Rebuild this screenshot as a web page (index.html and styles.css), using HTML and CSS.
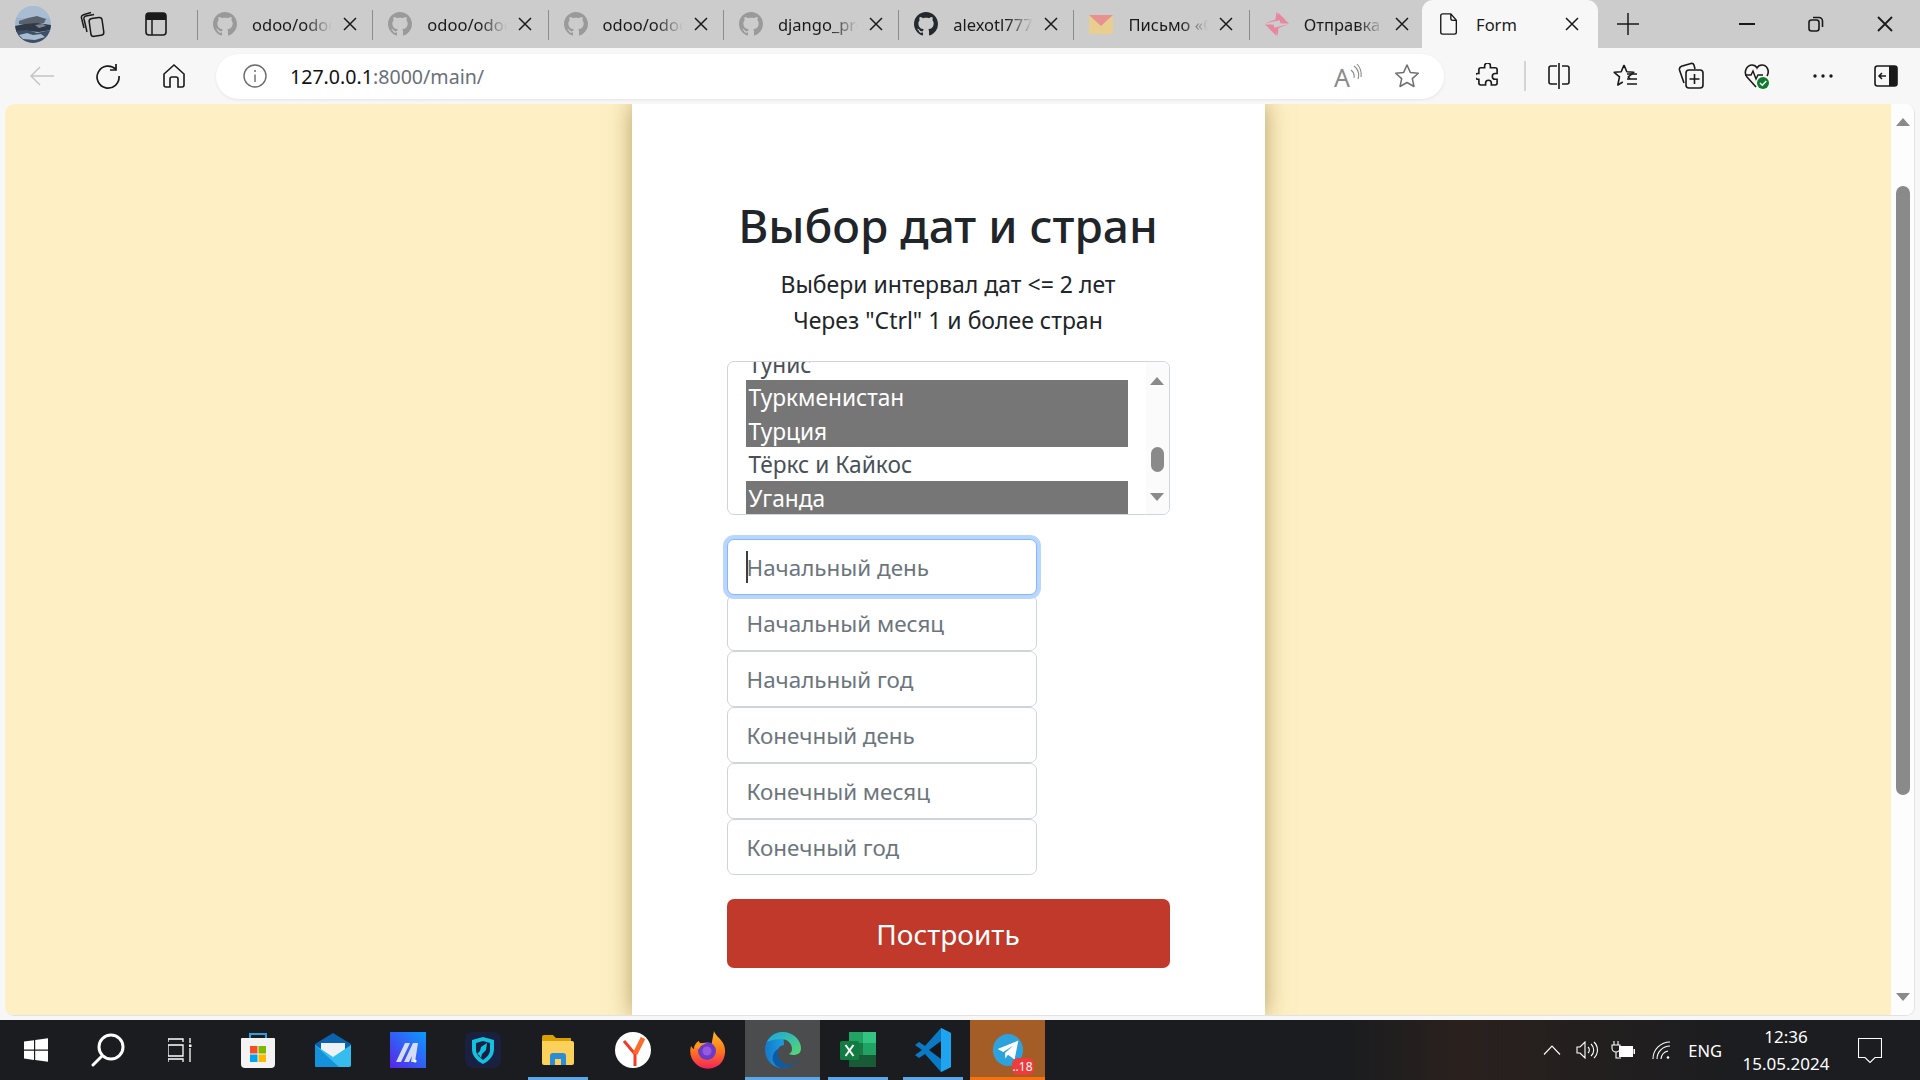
FILE: index.html
```html
<!DOCTYPE html>
<html>
<head>
    <title>Form</title>
    <link rel="stylesheet" href="styles.css">
</head>
<body>
    <svg class="defs" width="0" height="0">
        <symbol id="gh" viewBox="0 0 16 16"><path d="M8 0C3.58 0 0 3.58 0 8c0 3.54 2.29 6.53 5.47 7.59.4.07.55-.17.55-.38 0-.19-.01-.82-.01-1.49-2.01.37-2.53-.49-2.69-.94-.09-.23-.48-.94-.82-1.13-.28-.15-.68-.52-.01-.53.63-.01 1.08.58 1.23.82.72 1.21 1.87.87 2.33.66.07-.52.28-.87.51-1.07-1.78-.2-3.64-.89-3.64-3.95 0-.87.31-1.59.82-2.15-.08-.2-.36-1.02.08-2.12 0 0 .67-.21 2.2.82.64-.18 1.32-.27 2-.27.68 0 1.36.09 2 .27 1.53-1.04 2.2-.82 2.2-.82.44 1.1.16 1.92.08 2.12.51.56.82 1.27.82 2.15 0 3.07-1.87 3.75-3.65 3.95.29.25.54.73.54 1.48 0 1.07-.01 1.93-.01 2.2 0 .21.15.46.55.38A8.013 8.013 0 0016 8c0-4.42-3.58-8-8-8z"/></symbol>
        <symbol id="x" viewBox="0 0 14 14"><path d="M1 1l12 12M13 1L1 13" fill="none" stroke="currentColor" stroke-width="1.5"/></symbol>
    </svg>

    <!-- tabs -->
    <div class="tabstrip">
        <div class="strip-left">
            <svg class="avatar" width="36" height="37" viewBox="0 0 36 37">
                <defs><clipPath id="av"><ellipse cx="18" cy="18.500" rx="18" ry="18.500"/></clipPath></defs>
                <g clip-path="url(#av)">
                    <rect width="36" height="37" fill="#9db4cc"/>
                    <path d="M0 0h36v12H0z" fill="#a9bdd2"/>
                    <path d="M4 15l9-3 9-2 9 3-2 4-8 1-10 1-7-1z" fill="#59616d"/>
                    <path d="M0 20l10-2 12-1 14 2v5l-12 2-12-1-12 1z" fill="#2f3947"/>
                    <path d="M0 25l12-1 10 3 14-3v13H0z" fill="#3d5068"/>
                    <path d="M4 29l8-2 6 2 8-1 4 3-10 3-12-1z" fill="#a8bccd"/>
                    <path d="M20 19l8-1 3 2-7 2z" fill="#7d8794"/>
                </g>
            </svg>
            <svg class="strip-icon" width="26" height="28" viewBox="0 0 26 28" fill="none" stroke="#1a1a1a" stroke-width="1.5">
                <rect x="10" y="8" width="13" height="18" rx="3" transform="rotate(-8 16 17)"/>
                <path d="M7 22L4 9c-.3-1.5.4-2.7 2-3l8-1.6M4 18L1.500 8c-.4-1.600.4-2.800 2-3.300L11 2.500"/>
            </svg>
            <svg class="strip-icon" width="22" height="26" viewBox="0 0 22 26">
                <rect x="1" y="2" width="20" height="22" rx="3" fill="none" stroke="#1a1a1a" stroke-width="1.600"/>
                <path d="M1 5a3 3 0 013-3h14a3 3 0 013 3v4H1z" fill="#1a1a1a"/>
                <path d="M7 9v15" stroke="#1a1a1a" stroke-width="1.500"/>
            </svg>
        </div>
        <div class="tab"><svg class="favicon muted"><use href="#gh"/></svg><span class="tab-title">odoo/odoo: Odoo</span><svg class="tab-close"><use href="#x"/></svg></div>
        <div class="tab"><svg class="favicon muted"><use href="#gh"/></svg><span class="tab-title">odoo/odoo: Odoo</span><svg class="tab-close"><use href="#x"/></svg></div>
        <div class="tab"><svg class="favicon muted"><use href="#gh"/></svg><span class="tab-title">odoo/odoo: Odoo</span><svg class="tab-close"><use href="#x"/></svg></div>
        <div class="tab"><svg class="favicon muted"><use href="#gh"/></svg><span class="tab-title">django_project</span><svg class="tab-close"><use href="#x"/></svg></div>
        <div class="tab"><svg class="favicon"><use href="#gh"/></svg><span class="tab-title">alexotl777/project</span><svg class="tab-close"><use href="#x"/></svg></div>
        <div class="tab">
            <svg class="favicon" viewBox="0 0 24 24"><rect y="3" width="24" height="19" fill="#e8cf8f"/><path d="M0 3h24L12 14z" fill="#e79191"/></svg>
            <span class="tab-title">Письмо «Отправка»</span><svg class="tab-close"><use href="#x"/></svg>
        </div>
        <div class="tab">
            <svg class="favicon" viewBox="0 0 24 24"><path d="M0 11.500L10.500 7.500 11.500 0l4 8zM12.500 0l8 8-5 3.500zM24 12l-10.500 4-1 8-4-8zM11.500 24l-8-8 5-3.500zM0 12.500h8l-4 3.500z" fill="#e8859f"/><path d="M24 11.500h-8l4-3.500z" fill="#e8859f"/></svg>
            <span class="tab-title">Отправка письма</span><svg class="tab-close"><use href="#x"/></svg>
        </div>
        <div class="tab tab-active">
            <svg class="favicon" viewBox="0 0 24 24" stroke="#1a1a1a" stroke-width="1.500"><path d="M5 1h9l6 7v13a2 2 0 01-2 2H5a2 2 0 01-2-2V3a2 2 0 012-2zM14 1v5a2 2 0 002 2h4"/></svg>
            <span class="tab-title">Form</span><svg class="tab-close"><use href="#x"/></svg>
        </div>
        <svg class="new-tab" width="22" height="22" viewBox="0 0 22 22"><path d="M11 0v22M0 11h22" stroke="#1a1a1a" stroke-width="1.500"/></svg>
        <div class="win-controls">
            <svg width="16" height="16" viewBox="0 0 16 16"><path d="M0 8h16" stroke="#1a1a1a" stroke-width="2"/></svg>
            <svg width="16" height="16" viewBox="0 0 16 16" fill="none" stroke="#1a1a1a" stroke-width="1.600"><rect x="1" y="4" width="10" height="11" rx="2.500"/><path d="M5 1.500h6a3.500 3.500 0 013.500 3.500v6"/></svg>
            <svg width="16" height="16" viewBox="0 0 16 16"><path d="M1 1l14 14M15 1L1 15" stroke="#1a1a1a" stroke-width="1.800"/></svg>
        </div>
    </div>

    <!-- toolbar -->
    <div class="toolbar">
        <div class="nav-btn"><svg width="24" height="24" viewBox="0 0 24 24" fill="none" stroke="#c4c4c4" stroke-width="1.500"><path d="M24 12H1M10 3l-9 9 9 9"/></svg></div>
        <div class="nav-btn"><svg width="26" height="26" viewBox="0 0 26 26" fill="none" stroke="#1a1a1a" stroke-width="1.700"><path d="M21 6.500A11 11 0 1024 13"/><path d="M21 1v6h-6"/></svg></div>
        <div class="nav-btn"><svg width="24" height="26" viewBox="0 0 24 26" fill="none" stroke="#1a1a1a" stroke-width="1.600"><path d="M12 2L2 11v11a2 2 0 002 2h4v-8a2 2 0 012-2h4a2 2 0 012 2v8h4a2 2 0 002-2V11z"/></svg></div>
        <div class="addressbar">
            <svg class="info" width="24" height="24" viewBox="0 0 24 24"><circle cx="12" cy="12" r="11" fill="none" stroke="#6b6b6b" stroke-width="1.400"/><path d="M12 10.500v7.500" stroke="#6b6b6b" stroke-width="1.400"/><circle cx="12" cy="7" r="1" fill="#6b6b6b"/></svg>
            <span class="url"><span class="url-host">127.0.0.1</span>:8000/main/</span>
            <svg class="read-aloud" width="28" height="26" viewBox="0 0 28 26"><text x="0" y="24" class="read-a">A</text><path d="M17 7a8 8 0 013 8M20 3a12 12 0 014 13M23 1a16 16 0 014 13" fill="none" stroke="#8a8a8a" stroke-width="1.100"/></svg>
            <svg class="addr-star" width="26" height="26" viewBox="0 0 26 26"><path d="M13 2l3.300 7.400 8 .8-6 5.400 1.700 7.900-7-4-7 4 1.700-7.900-6-5.400 8-.8z" fill="none" stroke="#6f6f6f" stroke-width="1.500" stroke-linejoin="round"/></svg>
        </div>
        <div class="tool-group">
            <svg class="tool t-puzzle" width="24" height="26" viewBox="0 0 24 26" fill="none" stroke="#1a1a1a" stroke-width="1.700"><path d="M9 4a3 3 0 016 0v2h5a2 2 0 012 2v4h-2a3 3 0 000 6h2v4a2 2 0 01-2 2h-4v-2a3 3 0 00-6 0v2H5a2 2 0 01-2-2v-4H2a3 3 0 010-6h1V8a2 2 0 012-2h4z" transform="translate(0 -1) scale(.96)"/></svg>
            <span class="tool-sep"></span>
            <svg class="tool t-split" width="24" height="26" viewBox="0 0 24 26" fill="none" stroke="#1a1a1a" stroke-width="1.600"><path d="M10 3H4a2 2 0 00-2 2v14a2 2 0 002 2h6M15 3h5a2 2 0 012 2v14a2 2 0 01-2 2h-5M12 0v26"/></svg>
            <svg class="tool t-favs" width="26" height="26" viewBox="0 0 26 26" fill="none" stroke="#1a1a1a" stroke-width="1.600" stroke-linejoin="round"><path d="M12 2l2.800 6.700 7 .6-5.500 4.600 1.700 2M12 2L9.200 8.700l-7 .6 5.300 4.600-1.700 8.100 5-3"/><path d="M15 11h10M15 16h10M15 21h10"/></svg>
            <svg class="tool t-coll" width="26" height="28" viewBox="0 0 26 28" fill="none" stroke="#1a1a1a" stroke-width="1.600"><path d="M6 21L1.500 8C1 6 2 5 3.500 4.300L13 1.500c1.500-.4 2.500.3 3 1.500l1 4"/><rect x="8" y="8" width="17" height="18" rx="3"/><path d="M16.500 12v10M11.500 17h10"/></svg>
            <svg class="tool t-health" width="26" height="28" viewBox="0 0 26 28"><path d="M12 25L3 15C-1 10 3 3 8 3c2 0 4 1 5 3 1-2 3-3 5-3 5 0 8 6 5 11" fill="none" stroke="#1a1a1a" stroke-width="1.600"/><path d="M1 13h6l2-4 3 8 2-4h5" fill="none" stroke="#1a1a1a" stroke-width="1.500"/><circle cx="19" cy="21" r="6" fill="#0f7b2e"/><path d="M16 21l2.300 2.300 4-4.300" fill="none" stroke="#fff" stroke-width="1.400"/></svg>
            <svg class="tool t-dots" width="20" height="6" viewBox="0 0 20 6"><circle cx="2" cy="3" r="1.700" fill="#1a1a1a"/><circle cx="10" cy="3" r="1.700" fill="#1a1a1a"/><circle cx="18" cy="3" r="1.700" fill="#1a1a1a"/></svg>
            <svg class="tool t-side" width="24" height="22" viewBox="0 0 24 22"><rect x="1" y="1" width="22" height="20" rx="2.500" fill="none" stroke="#1a1a1a" stroke-width="1.600"/><path d="M15 1h6a2 2 0 012 2v16a2 2 0 01-2 2h-6z" fill="#1a1a1a"/><path d="M12 11H5M8 8l-3 3 3 3" fill="none" stroke="#1a1a1a" stroke-width="1.500"/></svg>
        </div>
    </div>

    <!-- page -->
    <div class="viewport">
        <div class="page">
            <div class="panel">
                <h1>Выбор дат и стран</h1>
                <p class="hint">Выбери интервал дат &lt;= 2 лет</p>
                <p class="hint">Через "Ctrl" 1 и более стран</p>
                <div class="country-select">
                    <div class="country-list">
                        <div class="country">Тунис</div>
                        <div class="country selected">Туркменистан</div>
                        <div class="country selected">Турция</div>
                        <div class="country">Тёркс и Кайкос</div>
                        <div class="country selected">Уганда</div>
                    </div>
                    <div class="list-scroll">
                        <span class="arrow-up"></span>
                        <span class="list-thumb"></span>
                        <span class="arrow-down"></span>
                    </div>
                </div>
                <div class="fields">
                    <input class="field field-focus" type="text" placeholder="Начальный день">
                    <input class="field" type="text" placeholder="Начальный месяц">
                    <input class="field" type="text" placeholder="Начальный год">
                    <input class="field" type="text" placeholder="Конечный день">
                    <input class="field" type="text" placeholder="Конечный месяц">
                    <input class="field" type="text" placeholder="Конечный год">
                </div>
                <button class="build">Построить</button>
            </div>
        </div>
        <div class="page-scroll">
            <span class="arrow-up"></span>
            <span class="page-thumb"></span>
            <span class="arrow-down"></span>
        </div>
    </div>

    <!-- taskbar -->
    <div class="taskbar">
        <div class="task-slot narrow"><svg width="24" height="24" viewBox="0 0 24 24" fill="#fff"><path d="M0 3.500l10-1.300v9.300H0zM11.200 2L24 .2v11.300H11.200zM0 12.700h10v9.200L0 20.500zM11.200 12.700H24v11.100L11.200 22z"/></svg></div>
        <div class="task-slot narrow"><svg width="34" height="34" viewBox="0 0 34 34" fill="none" stroke="#fff" stroke-width="3"><circle cx="20" cy="14" r="12"/><path d="M11 23L2 32" stroke-linecap="round"/></svg></div>
        <div class="task-slot narrow"><svg width="24" height="24" viewBox="0 0 24 24" fill="none" stroke="#fff" stroke-width="1.300"><path d="M0 4V1h15v3M0 7h15v11H0zM0 24v-3h15v3M22 0v5M22 10v14"/><rect x="21" y="6.500" width="2.500" height="2.500" fill="#fff" stroke="none"/></svg></div>
        <div class="task-slot first-app">
            <svg width="36" height="36" viewBox="0 0 36 36"><path d="M10 7V2h16v5" fill="none" stroke="#2aa0e0" stroke-width="2"/><path d="M2 6h32a1 1 0 011 1v25a4 4 0 01-4 4H5a4 4 0 01-4-4V7a1 1 0 011-1z" fill="#f3f3f3"/><rect x="10" y="14" width="7.500" height="7.500" fill="#f25022"/><rect x="18.500" y="14" width="7.500" height="7.500" fill="#7fba00"/><rect x="10" y="22.500" width="7.500" height="7.500" fill="#00a4ef"/><rect x="18.500" y="22.500" width="7.500" height="7.500" fill="#ffb900"/></svg>
        </div>
        <div class="task-slot">
            <svg width="36" height="34" viewBox="0 0 36 34"><path d="M18 0L0 11v21a2 2 0 002 2h32a2 2 0 002-2V11z" fill="#0b63ae"/><path d="M6 10h24v9l-12 7-12-7z" fill="#eef2f5"/><path d="M0 12l18 12 18-12v20a2 2 0 01-2 2H2a2 2 0 01-2-2z" fill="#35bdf0"/><path d="M0 12l24 22H2a2 2 0 01-2-2z" fill="#1493dc"/></svg>
        </div>
        <div class="task-slot">
            <svg width="36" height="36" viewBox="0 0 36 36"><defs><linearGradient id="mg" x1="0" y1="1" x2="1" y2="0"><stop offset="0" stop-color="#5a23ea"/><stop offset="1" stop-color="#0a9bff"/></linearGradient></defs><rect width="36" height="36" fill="url(#mg)"/><path d="M6 30L15 11h5L11 30zM14 30l9-19h5l-3 19h-4l1-6-3 6z" fill="#d5dcf8"/><circle cx="25" cy="29" r="1.600" fill="#fff"/></svg>
        </div>
        <div class="task-slot">
            <svg width="36" height="36" viewBox="0 0 36 36"><rect width="36" height="36" rx="8" fill="#1a2140"/><path d="M18 5l11 3v9c0 7-5 12-11 15C12 29 7 24 7 17V8z" fill="#12c3e0"/><path d="M18 9l7 2v7c0 4-3 7-7 10-4-3-7-6-7-10v-7z" fill="#172040"/><path d="M22 11l-1 7-4 4-1 4-2-3-2-1 3-3 1-4z" fill="#12c3e0"/></svg>
        </div>
        <div class="task-slot open">
            <svg width="34" height="32" viewBox="0 0 34 32"><path d="M1 3a2 2 0 012-2h9l3 3h15v6H1z" fill="#d9a000"/><path d="M1 7h30a2 2 0 012 2v20a2 2 0 01-2 2H3a2 2 0 01-2-2z" fill="#fbd15b"/><path d="M9 31v-9a3 3 0 013-3h10a3 3 0 013 3v9h-5v-6h-6v6z" fill="#2a8dd6"/></svg>
        </div>
        <div class="task-slot">
            <svg width="36" height="36" viewBox="0 0 36 36"><circle cx="18" cy="18" r="18" fill="#fff"/><path d="M9 9l11 13v12" fill="none" stroke="#f33b24" stroke-width="3"/><path d="M28 6L20 22" fill="none" stroke="#ff6a2b" stroke-width="5"/></svg>
        </div>
        <div class="task-slot">
            <svg width="36" height="38" viewBox="0 0 36 38"><defs><linearGradient id="ff" x1="0" y1="0" x2="0" y2="1"><stop offset="0" stop-color="#ffbd2e"/><stop offset=".5" stop-color="#ff7a1a"/><stop offset="1" stop-color="#f5225c"/></linearGradient></defs><path d="M24 0c1 4 6 7 9 12 4 7 2 17-4 22-7 5-17 5-23-1C1 29-1 22 1 15c1 1 2 3 3 3 0-3 2-7 5-8 0 2 2 3 4 3 3 0 7 1 8 3 1-5 2-11 3-16z" fill="url(#ff)"/><circle cx="17" cy="20" r="9" fill="#6a3bc8"/><circle cx="17" cy="20" r="4.500" fill="#9a58e0"/><path d="M4 16c3-4 9-5 13-3-4 0-7 2-8 5z" fill="#ff9a1a"/></svg>
        </div>
        <div class="task-slot tile">
            <svg width="36" height="38" viewBox="0 0 36 38"><defs><linearGradient id="eg" x1="0" y1="0" x2="1" y2="0"><stop offset="0" stop-color="#1578c8"/><stop offset="1" stop-color="#1ea9e8"/></linearGradient><linearGradient id="eg2" x1="0" y1="0" x2="1" y2="1"><stop offset="0" stop-color="#18a6e0"/><stop offset="1" stop-color="#5ad86f"/></linearGradient></defs><path d="M18 1C7 1 0 9 0 19c0 10 8 18 17 18 3 0 5-1 7-2-7 0-12-6-12-13 0-5 4-8 7-8z" fill="url(#eg)"/><path d="M2 11C5 5 11 1 18 1c10 0 18 8 18 16 0 5-3 7-8 7-2 0-4-1-4-1 2-1 3-3 3-5 0-6-5-10-11-10C11 8 6 9 2 11z" fill="url(#eg2)"/><path d="M13 22c0 8 7 14 14 11 3-1 5-3 7-6-2 6-9 10-16 10-2 0-3 0-5-1-5-3-7-9-4-14 1-2 2-3 4-4-1 1-0 2 0 4z" fill="#0d5aa5"/></svg>
        </div>
        <div class="task-slot open">
            <svg width="36" height="38" viewBox="0 0 36 38"><path d="M9 1h25a2 2 0 012 2v31a2 2 0 01-2 2H9z" fill="#1a7a45"/><rect x="9" y="1" width="14" height="11" fill="#21a366"/><rect x="23" y="1" width="13" height="11" fill="#33c481"/><rect x="23" y="12" width="13" height="12" fill="#21a366"/><rect x="9" y="24" width="27" height="12" fill="#185c37"/><rect y="10" width="19" height="19" rx="1.500" fill="#107c41"/><path d="M5.500 14l8 11M13.500 14l-8 11" stroke="#fff" stroke-width="2"/></svg>
        </div>
        <div class="task-slot open">
            <svg width="36" height="44" viewBox="0 0 36 44"><path d="M26 0l10 5v34l-10 5L10 26l-6 4-4-3 7-5-7-5 4-3 6 4z" fill="#0a7ac6"/><path d="M26 0l10 5v34l-10 5z" fill="#1fa4f0"/><path d="M26 13L14 22l12 9z" fill="#15171a"/></svg>
        </div>
        <div class="task-slot alert">
            <div class="tg-wrap">
                <svg width="32" height="32" viewBox="0 0 32 34"><ellipse cx="16" cy="17" rx="16" ry="17" fill="#2ca3dc"/><path d="M5 16L27 7l-4 20-7-5-3 4v-6l9-8-11 7z" fill="#fff"/></svg>
                <span class="tg-badge">..18</span>
            </div>
        </div>
        <div class="tray">
            <svg width="18" height="10" viewBox="0 0 18 10"><path d="M1 9.500L9 1l8 8.500" fill="none" stroke="#fff" stroke-width="1.100"/></svg>
            <svg class="tray-vol" width="22" height="18" viewBox="0 0 22 18" fill="none" stroke="#fff" stroke-width="1.100"><path d="M1 6v6h3l5 5V1L4 6zM12 6a4 4 0 010 6M15 3a8 8 0 010 12M18 1a11 11 0 010 16"/></svg>
            <svg class="tray-bat" width="24" height="18" viewBox="0 0 24 18"><path d="M3 0v4M7 0v4M1 4h8v3a4 4 0 01-8 0zM5 11v6h5" fill="none" stroke="#fff" stroke-width="1.100"/><rect x="8" y="5" width="14" height="11" fill="#fff"/><rect x="22.500" y="8" width="1.500" height="5" fill="#fff"/></svg>
            <svg class="tray-wifi" width="18" height="18" viewBox="0 0 18 18" fill="none" stroke="#fff" stroke-width="1.100"><path d="M1 18A17 17 0 0118 1M5 18A13 13 0 0118 5M9 18a9 9 0 017-8"/><circle cx="16" cy="16.500" r="1.300" fill="#fff" stroke="none"/></svg>
            <span class="tray-lang">ENG</span>
            <div class="clock"><span>12:36</span><span>15.05.2024</span></div>
            <svg class="tray-note" width="24" height="25" viewBox="0 0 24 25"><path d="M.5.500h23v19H17l-5 5-5-5H.5z" fill="none" stroke="#fff" stroke-width="1.100"/></svg>
        </div>
    </div>
</body>
</html>
```

FILE: styles.css
```css
* {
    box-sizing: border-box;
}

body {
    margin: 0;
    width: 1920px;
    height: 1080px;
    overflow: hidden;
    display: flex;
    flex-direction: column;
    font-family: "Noto Sans", "Open Sans", sans-serif;
    background-color: #f7f7f7;
}

.defs {
    display: none;
}

/* tab strip */
.tabstrip {
    height: 48px;
    flex-shrink: 0;
    display: flex;
    align-items: stretch;
    background-color: #cccccc;
}

.strip-left {
    width: 197px;
    flex-shrink: 0;
    display: flex;
    align-items: center;
    padding-left: 15px;
}

.strip-icon:nth-child(2) {
    margin-left: 29px;
}

.strip-icon:nth-child(3) {
    margin-left: 39px;
}

.tab {
    width: 175.3px;
    flex-shrink: 0;
    display: flex;
    align-items: center;
    padding-left: 16px;
    position: relative;
    font-size: 16.5px;
    color: #1a1a1a;
}

.tab::before {
    content: "";
    position: absolute;
    left: 0;
    top: 10px;
    height: 30px;
    width: 1px;
    background-color: #8c8c8c;
}

.favicon {
    width: 24px;
    height: 24px;
    flex-shrink: 0;
    fill: #24292e;
}

.favicon.muted {
    fill: #9a9a9a;
}

.tab-title {
    width: 80px;
    margin-left: 15px;
    margin-right: 4px;
    white-space: nowrap;
    overflow: hidden;
    -webkit-mask-image: linear-gradient(to right, #000 66%, transparent 100%);
    mask-image: linear-gradient(to right, #000 66%, transparent 100%);
}

.tab-close {
    width: 14px;
    height: 14px;
    margin-left: 7px;
    flex-shrink: 0;
    color: #1a1a1a;
}

.tab-active {
    width: 176px;
    margin-left: -2px;
    background-color: #f7f7f7;
    border-radius: 11px 11px 0 0;
    padding-left: 16px;
}

.tab-active::before {
    display: none;
}

.tab-active .favicon {
    width: 22px;
    fill: none;
}

.tab-active .tab-title {
    -webkit-mask-image: none;
    mask-image: none;
    margin-left: 16px;
    margin-right: 0;
    width: 84px;
}

.tab-active .tab-close {
    margin-left: 5px;
}

.new-tab {
    align-self: center;
    margin-left: 19px;
}

.win-controls {
    margin-left: auto;
    width: 277px;
    padding: 0 27px 0 96px;
    display: flex;
    align-items: center;
    justify-content: space-between;
}

/* toolbar */
.toolbar {
    height: 56px;
    flex-shrink: 0;
    display: flex;
    align-items: center;
    background-color: #f7f7f7;
    padding-left: 9px;
}

.nav-btn {
    width: 66px;
    display: flex;
    justify-content: center;
}

.addressbar {
    width: 1228px;
    height: 45px;
    margin-left: 9px;
    display: flex;
    align-items: center;
    background-color: #fff;
    border-radius: 23px;
    box-shadow: 0 1px 3px rgba(0, 0, 0, 0.08);
    padding: 0 24px 0 27px;
}

.url {
    margin-left: 23px;
    font-size: 19.6px;
    color: #69707a;
}

.url-host {
    color: #111;
}

.read-aloud {
    margin-left: auto;
}

.read-a {
    font-size: 25px;
    fill: #8a8a8a;
}

.addr-star {
    margin-left: 32px;
}

.tool-group {
    flex: 1;
    display: flex;
    align-items: center;
    padding-left: 32px;
}

.tool-sep {
    width: 2px;
    height: 30px;
    margin-left: 24px;
    background-color: #d4d4d4;
}

.t-split {
    margin-left: 21px;
}

.t-favs {
    margin-left: 41px;
}

.t-coll {
    margin-left: 40px;
}

.t-health {
    margin-left: 40px;
}

.t-dots {
    margin-left: 43px;
}

.t-side {
    margin-left: 41px;
}

/* page area */
.viewport {
    width: 1910px;
    height: 912px;
    margin: 0 5px;
    flex-shrink: 0;
    display: flex;
    overflow: hidden;
    border-radius: 9px;
    border-bottom: 1px solid #e2e2e2;
    border-right: 1px solid #e2e2e2;
    background-color: #fff;
}

.page {
    width: 1886px;
    flex-shrink: 0;
    overflow: hidden;
    background-color: #fef0c4;
}

.panel {
    width: 633px;
    min-height: 100%;
    margin: 0 auto;
    padding: 91px 95px 0;
    background-color: #fff;
    box-shadow: 0 0 22px rgba(120, 90, 20, 0.55);
    color: #212529;
    text-align: center;
}

h1 {
    margin: 0 0 11px;
    font-size: 46px;
    font-weight: 500;
    line-height: 60px;
    white-space: nowrap;
}

.hint {
    margin: 0;
    font-size: 23px;
    line-height: 36px;
}

.country-select {
    height: 154px;
    margin-top: 23px;
    display: flex;
    border: 1px solid #ced4da;
    border-radius: 7px;
    overflow: hidden;
    text-align: left;
}

.country-list {
    width: 418px;
    padding: 0 18px;
    display: flex;
    flex-direction: column;
    justify-content: flex-end;
    overflow: hidden;
    font-size: 22.7px;
}

.country {
    height: 33.5px;
    flex-shrink: 0;
    padding-left: 3px;
    line-height: 35px;
    white-space: nowrap;
    color: #495057;
}

.country.selected {
    background-color: #767676;
    color: #fff;
}

.list-scroll {
    width: 23px;
    display: flex;
    flex-direction: column;
    align-items: center;
    background-color: #fbfbfb;
    padding-top: 15px;
}

.arrow-up,
.arrow-down {
    width: 0;
    height: 0;
    border-left: 7px solid transparent;
    border-right: 7px solid transparent;
}

.arrow-up {
    border-bottom: 8px solid #8a8a8a;
}

.arrow-down {
    border-top: 8px solid #8a8a8a;
}

.list-thumb {
    width: 13px;
    height: 25px;
    margin: 62px 0 21px;
    border-radius: 7px;
    background-color: #8a8a8a;
}

.fields {
    width: 310px;
    margin-top: 24px;
    display: flex;
    flex-direction: column;
}

.field {
    height: 56px;
    padding: 0 19px;
    border: 1px solid #ced4da;
    border-radius: 7px;
    outline: none;
    font-family: inherit;
    font-size: 22.4px;
    color: #212529;
    background-color: #fff;
}

.field::placeholder {
    color: #6c757d;
    opacity: 1;
}

.field-focus {
    position: relative;
    z-index: 1;
    border-color: #86b7fe;
    box-shadow: 0 0 0 4px #b9d7fe;
    background-image: linear-gradient(#3a3f46, #3a3f46);
    background-repeat: no-repeat;
    background-size: 2px 32px;
    background-position: 18px center;
}

.build {
    display: block;
    width: 443px;
    height: 69px;
    margin-top: 24px;
    border: none;
    border-radius: 7px;
    background-color: #c0392b;
    color: #fff;
    font-family: inherit;
    font-size: 28px;
}

.page-scroll {
    flex: 1;
    display: flex;
    flex-direction: column;
    align-items: center;
    background-color: #fdfdfd;
    padding-top: 14px;
}

.page-thumb {
    width: 14px;
    height: 609px;
    margin: 60px 0 198px;
    border-radius: 7px;
    background-color: #8a8a8a;
}

/* taskbar */
.taskbar {
    height: 60px;
    margin-top: auto;
    flex-shrink: 0;
    display: flex;
    background: linear-gradient(to right, #1a1c1f 0, #1a1c1f 70%, #2a211e 76%, #1c1d20 90%);
}

.task-slot {
    width: 75px;
    flex-shrink: 0;
    display: flex;
    align-items: center;
    justify-content: center;
    position: relative;
}

.task-slot.narrow {
    width: 72px;
}

.first-app {
    margin-left: 4px;
}

.open::after,
.tile::after,
.alert::after {
    content: "";
    position: absolute;
    left: 8px;
    right: 7px;
    bottom: 0;
    height: 3px;
    background-color: #5ba8e8;
}

.tile {
    background-color: #4b4c4e;
}

.tile::after {
    left: 0;
    right: 0;
}

.alert {
    background-color: #a55d27;
}

.alert::after {
    left: 0;
    right: 0;
    background-color: #f7720c;
}

.tg-wrap {
    position: relative;
    display: flex;
}

.tg-badge {
    position: absolute;
    right: -10px;
    bottom: -9px;
    width: 22px;
    height: 17px;
    border-radius: 6px;
    background-color: #ee3b3b;
    color: #fff;
    font-size: 12px;
    line-height: 17px;
    text-align: center;
}

.tray {
    margin-left: auto;
    display: flex;
    align-items: center;
    padding-right: 38px;
    color: #fff;
}

.tray-vol {
    margin-left: 15px;
}

.tray-bat {
    margin-left: 13px;
}

.tray-wifi {
    margin-left: 17px;
}

.tray-lang {
    margin-left: 18px;
    font-size: 16.5px;
}

.clock {
    width: 118px;
    margin-left: 5px;
    display: flex;
    flex-direction: column;
    align-items: center;
    gap: 7px;
    font-size: 17px;
    line-height: 20px;
}

.tray-note {
    margin-left: 13px;
}
```
